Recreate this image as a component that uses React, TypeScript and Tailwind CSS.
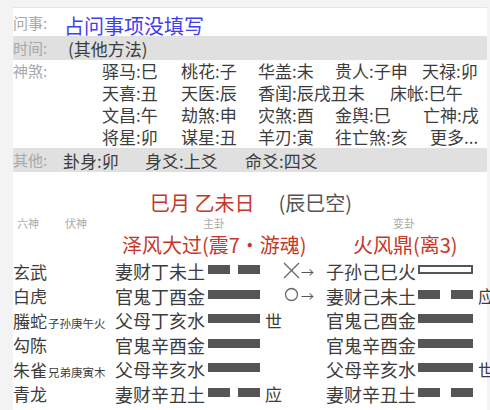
import React from "react"

type Line = "yang" | "yin" | "hollow"

interface Yao {
  liushen: string
  fushen: string
  main: string
  mainLine: Line
  mainMark: string
  change: "" | "x" | "o"
  sub: string
  subLine: Line
  subMark: string
}

const shensha: { text: string; w: string }[][] = [
  [
    { text: "驿马:巳", w: "w-[79px]" },
    { text: "桃花:子", w: "w-[77px]" },
    { text: "华盖:未", w: "w-[77px]" },
    { text: "贵人:子申", w: "w-[87px]" },
    { text: "天禄:卯", w: "" },
  ],
  [
    { text: "天喜:丑", w: "w-[79px]" },
    { text: "天医:辰", w: "w-[77px]" },
    { text: "香闺:辰戌丑未", w: "w-[132px]" },
    { text: "床帐:巳午", w: "" },
  ],
  [
    { text: "文昌:午", w: "w-[79px]" },
    { text: "劫煞:申", w: "w-[77px]" },
    { text: "灾煞:酉", w: "w-[77px]" },
    { text: "金舆:巳", w: "w-[88px]" },
    { text: "亡神:戌", w: "" },
  ],
  [
    { text: "将星:卯", w: "w-[79px]" },
    { text: "谋星:丑", w: "w-[77px]" },
    { text: "羊刃:寅", w: "w-[77px]" },
    { text: "往亡煞:亥", w: "w-[95px]" },
    { text: "更多...", w: "" },
  ],
]

const yaos: Yao[] = [
  { liushen: "玄武", fushen: "", main: "妻财丁未土", mainLine: "yin", mainMark: "", change: "x", sub: "子孙己巳火", subLine: "hollow", subMark: "" },
  { liushen: "白虎", fushen: "", main: "官鬼丁酉金", mainLine: "yang", mainMark: "", change: "o", sub: "妻财己未土", subLine: "yin", subMark: "应" },
  { liushen: "螣蛇", fushen: "子孙庚午火", main: "父母丁亥水", mainLine: "yang", mainMark: "世", change: "", sub: "官鬼己酉金", subLine: "yang", subMark: "" },
  { liushen: "勾陈", fushen: "", main: "官鬼辛酉金", mainLine: "yang", mainMark: "", change: "", sub: "官鬼辛酉金", subLine: "yang", subMark: "" },
  { liushen: "朱雀", fushen: "兄弟庚寅木", main: "父母辛亥水", mainLine: "yang", mainMark: "", change: "", sub: "父母辛亥水", subLine: "yang", subMark: "世" },
  { liushen: "青龙", fushen: "", main: "妻财辛丑土", mainLine: "yin", mainMark: "应", change: "", sub: "妻财辛丑土", subLine: "yin", subMark: "" },
]

function Bar({ line, w }: { line: Line; w: string }) {
  if (line === "yang") return <div className={`${w} shrink-0 h-[9px] bg-[#555] mb-[3px]`} />
  if (line === "hollow") return <div className={`${w} shrink-0 h-[9px] border-2 border-[#555] bg-white mb-[3px]`} />
  return (
    <div className={`${w} shrink-0 h-[9px] flex justify-between mb-[3px]`}>
      <div className="w-[22px] h-full bg-[#555]" />
      <div className="w-[22px] h-full bg-[#555]" />
    </div>
  )
}

function ChangeMark({ kind }: { kind: Yao["change"] }) {
  if (!kind) return null
  return (
    <div className="flex items-center text-[#555]">
      {kind === "x" ? (
        <svg width="17" height="17" viewBox="0 0 17 17" className="mb-[2px]">
          <path d="M1 1 L16 16 M16 1 L1 16" stroke="#666" strokeWidth="1.3" fill="none" />
        </svg>
      ) : (
        <svg width="17" height="17" viewBox="0 0 17 17" className="mb-[2px]">
          <circle cx="8.5" cy="8.5" r="6" stroke="#666" strokeWidth="1.3" fill="none" />
        </svg>
      )}
      <span className="text-[13px] leading-none ml-[1px]">→</span>
    </div>
  )
}

export default function App() {
  return (
    <div className="w-[490px] h-[410px] bg-[#f3f3f3] pt-[7px] pl-[13px] pr-[3px] font-['Noto_Sans_CJK_SC','Noto_Sans',sans-serif] text-[#3c3c3c] overflow-hidden">
      <div className="bg-white h-[403px] border-t border-[#e6e6e6]">
        {/* 问事 */}
        <div className="flex items-center h-[28px]">
          <div className="w-[51px] pt-[3px] text-[15px] text-[#a8a8a8]">问事:</div>
          <div className="pt-[8px] text-[20px] leading-none text-[#3e3ef0]">占问事项没填写</div>
        </div>

        {/* 时间 */}
        <div className="flex items-center h-[24px] bg-[#e0e0e0]">
          <div className="w-[55px] text-[15px] text-[#a8a8a8]">时间:</div>
          <div className="text-[17px] leading-none">(其他方法)</div>
        </div>

        {/* 神煞 */}
        <div className="flex">
          <div className="w-[89px] shrink-0 text-[15px] leading-[22px] text-[#a8a8a8]">神煞:</div>
          <div className="flex flex-col text-[17px] leading-[22px]">
            {shensha.map((row, i) => (
              <div key={i} className="flex whitespace-nowrap">
                {row.map((s) => (
                  <span key={s.text} className={`${s.w} shrink-0`}>
                    {s.text}
                  </span>
                ))}
              </div>
            ))}
          </div>
        </div>

        {/* 其他 */}
        <div className="flex items-center h-[24px] bg-[#e0e0e0]">
          <div className="w-[50px] text-[15px] text-[#a8a8a8]">其他:</div>
          <span className="w-[82px] text-[17px] leading-none">卦身:卯</span>
          <span className="w-[100px] text-[17px] leading-none">身爻:上爻</span>
          <span className="text-[17px] leading-none">命爻:四爻</span>
        </div>

        {/* 日期 */}
        <div className="flex items-center h-[28px] mt-[17px] pl-[137px] text-[20px] leading-none">
          <span className="text-[#c5382a]">巳月 乙未日</span>
          <span className="ml-[24px] text-[#555]">(辰巳空)</span>
        </div>

        {/* 表头 */}
        <div className="flex items-center h-[12px] pl-[4px] text-[11px] leading-none text-[#aaa]">
          <span className="w-[48px]">六神</span>
          <span className="w-[138px]">伏神</span>
          <span className="w-[190px]">主卦</span>
          <span>变卦</span>
        </div>

        {/* 卦名 */}
        <div className="flex items-center h-[30px] pt-[2px] pl-[109px] text-[20px] leading-none text-[#c5382a]">
          <span className="w-[231px]">泽风大过(震7·游魂)</span>
          <span>火风鼎(离3)</span>
        </div>

        {/* 六爻 */}
        <div className="flex flex-col">
          {yaos.map((y) => (
            <div key={y.liushen} className="flex items-center h-[24.5px] whitespace-nowrap">
              <div className="w-[102px] shrink-0 flex items-baseline">
                <span className="text-[17px] leading-none">{y.liushen}</span>
                {y.fushen && <span className="text-[11.5px] leading-none ml-[1px]">{y.fushen}</span>}
              </div>
              <div className="w-[93px] shrink-0 text-[18px] leading-none">{y.main}</div>
              <Bar line={y.mainLine} w="w-[52px]" />
              <div className="w-[23px] shrink-0 pl-[5px] text-[17px] leading-none">{y.mainMark}</div>
              <div className="w-[43px] shrink-0">
                <ChangeMark kind={y.change} />
              </div>
              <div className="w-[92px] shrink-0 text-[18px] leading-none">{y.sub}</div>
              <Bar line={y.subLine} w="w-[55px]" />
              <div className="shrink-0 pl-[5px] text-[17px] leading-none">{y.subMark}</div>
            </div>
          ))}
        </div>
      </div>
    </div>
  )
}
